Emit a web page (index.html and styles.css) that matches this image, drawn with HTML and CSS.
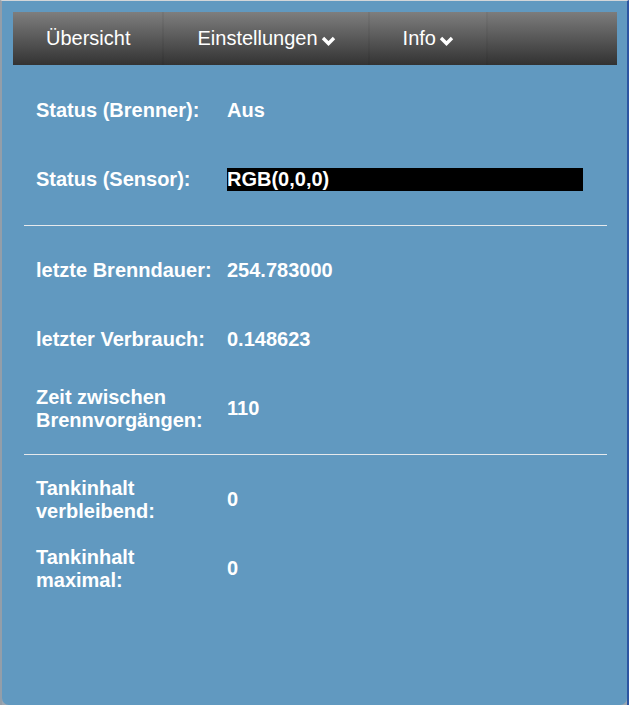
FILE: index.html
```html
<!DOCTYPE html>
<html lang="de">
<head>
<meta charset="utf-8">
<title>Brenner Übersicht</title>
<link rel="stylesheet" href="styles.css">
</head>
<body>
<div class="frame">
  <div class="panel">
    <nav class="nav">
      <a class="nav-item">Übersicht</a>
      <a class="nav-item">Einstellungen<svg class="chev" viewBox="0 0 15 10" width="15" height="10"><polyline points="2,2 7.5,7.5 13,2" fill="none" stroke="#fff" stroke-width="3.4"/></svg></a>
      <a class="nav-item">Info<svg class="chev" viewBox="0 0 15 10" width="15" height="10"><polyline points="2,2 7.5,7.5 13,2" fill="none" stroke="#fff" stroke-width="3.4"/></svg></a>
      <span class="nav-fill"></span>
    </nav>
    <main class="content">
      <section class="group">
        <div class="row"><div class="label">Status (Brenner):</div><div class="value">Aus</div></div>
        <div class="row"><div class="label">Status (Sensor):</div><div class="value"><span class="rgb">RGB(0,0,0)</span></div></div>
      </section>
      <hr class="sep">
      <section class="group">
        <div class="row"><div class="label">letzte Brenndauer:</div><div class="value">254.783000</div></div>
        <div class="row"><div class="label">letzter Verbrauch:</div><div class="value">0.148623</div></div>
        <div class="row"><div class="label">Zeit zwischen<br>Brennvorgängen:</div><div class="value">110</div></div>
      </section>
      <hr class="sep">
      <section class="group">
        <div class="row"><div class="label">Tankinhalt<br>verbleibend:</div><div class="value">0</div></div>
        <div class="row"><div class="label">Tankinhalt<br>maximal:</div><div class="value">0</div></div>
      </section>
    </main>
  </div>
</div>
</body>
</html>
```
FILE: styles.css
```css
html, body {
  margin: 0;
  padding: 0;
  height: 100%;
}
body {
  font-family: "Liberation Sans", Arial, sans-serif;
  background: #9aa6b2;
}
.frame {
  box-sizing: border-box;
  min-height: 100vh;
  display: flex;
  flex-direction: column;
  border-top: 1px solid #d3d6d9;
  border-left: 2px solid #939ea9;
  border-right: 2px solid #2c55a2;
  background: #9aa6b2;
}
.panel {
  flex: 1;
  background: #6199c0;
  border-radius: 0 0 7px 7px;
  padding: 11px 10px 0 11px;
  color: #fff;
}
.nav {
  display: flex;
  height: 53px;
  background: linear-gradient(#7c7c7c, #323232);
}
.nav-item {
  display: flex;
  align-items: center;
  padding: 0 32px 0 33px;
  font-size: 20px;
  color: #fff;
  border-right: 2px solid rgba(0, 0, 0, 0.05);
  background: linear-gradient(#7e7e7e, #333);
  cursor: pointer;
}
.chev {
  margin-left: 3px;
  margin-top: 4px;
}
.nav-fill {
  flex: 1;
}
.content {
  margin: 11px 10px 0 11px;
}
.row {
  height: 69px;
  display: grid;
  grid-template-columns: 191px 1fr;
  align-items: center;
  padding-left: 12px;
  font-size: 20px;
  font-weight: bold;
  line-height: 23px;
}
.rgb {
  display: inline-block;
  width: 356px;
  background: #000;
  color: #fff;
}
.sep {
  border: 0;
  height: 1px;
  background: #e6e9ec;
  margin: 11px 0 10px 0;
}
```
